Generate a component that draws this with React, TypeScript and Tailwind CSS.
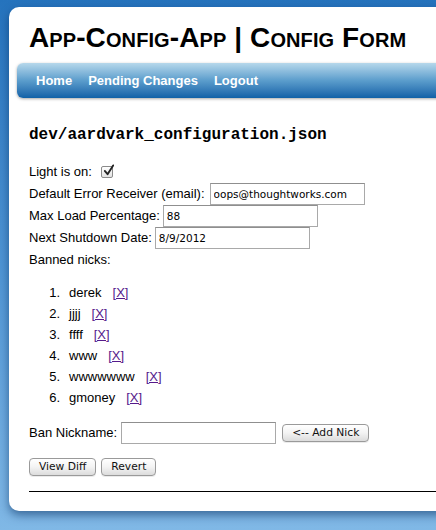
import React from "react";

const sans = { fontFamily: '"Liberation Sans", Arial, Helvetica, sans-serif' };

function MacButton({ children }: { children: React.ReactNode }) {
  return (
    <button
      type="button"
      className="h-[18px] px-[9px] rounded-[4px] border border-[#9a9a9a] bg-gradient-to-b from-[#ffffff] via-[#f3f3f3] to-[#dcdcdc] text-[10.7px] leading-[16px] text-[#111] shadow-[0_1px_0_rgba(0,0,0,0.08)] [font-family:'DejaVu_Sans',Verdana,sans-serif]"
    >
      {children}
    </button>
  );
}

function TextInput({ value, width = "w-[155px]" }: { value?: string; width?: string }) {
  return (
    <input
      type="text"
      defaultValue={value}
      className={`${width} h-[22px] border border-[#a9a9a9] border-t-[#8f8f8f] bg-white px-[3px] text-[10.5px] text-black outline-none [font-family:'DejaVu_Sans',Verdana,sans-serif]`}
    />
  );
}

export default function App() {
  const nicks = ["derek", "jjjj", "ffff", "www", "wwwwwww", "gmoney"];
  return (
    <div
      className="w-[436px] h-[530px] overflow-hidden bg-gradient-to-b from-[#2573bd] via-[#4f95d4] to-[#80b8e6] pt-[7px] pl-[9px]"
      style={sans}
    >
      <div className="w-[470px] bg-white rounded-l-[10px] pt-[15px] pb-[19px] shadow-[0_4px_10px_rgba(0,40,90,0.55)] text-[13px] text-black">
        <h1 className="px-[20px] h-[32px] text-[28px] leading-[32px] font-bold [font-variant:small-caps] whitespace-nowrap tracking-[0.1px]">
          App-Config-App | Config Form
        </h1>

        <nav className="mt-[9px] ml-[8px] h-[35px] rounded-[6px] bg-gradient-to-b from-[#b6d8eb] via-[#5b9dcc] to-[#0f61a7] shadow-[0_1px_3px_rgba(0,0,0,0.35)] flex items-center pl-[19px] gap-[16px] text-white font-bold text-[13px]">
          <a href="#">Home</a>
          <a href="#">Pending Changes</a>
          <a href="#">Logout</a>
        </nav>

        <div className="px-[20px]">
          <h2 className="mt-[27px] h-[20px] text-[16px] leading-[20px] font-bold [font-family:'Liberation_Mono','Courier_New',monospace]">
            dev/aardvark_configuration.json
          </h2>

          <div className="mt-[15px]">
            <div className="h-[23px] flex items-center">
              <span>Light is on:</span>
              <span className="ml-[9px] relative w-[12px] h-[12px] rounded-[2px] border border-[#8a8a8a] bg-gradient-to-b from-white to-[#e2e2e2]">
                <svg viewBox="0 0 14 14" className="absolute -top-[3px] left-[0px] w-[13px] h-[13px]">
                  <path d="M3 7.5 L6 11 L12 1.5" fill="none" stroke="#222" strokeWidth="2" strokeLinecap="round" strokeLinejoin="round" />
                </svg>
              </span>
            </div>
            <div className="h-[22px] flex items-center">
              <span>Default Error Receiver (email):</span>
              <span className="ml-[5px]">
                <TextInput value="oops@thoughtworks.com" />
              </span>
            </div>
            <div className="h-[22px] flex items-center">
              <span>Max Load Percentage:</span>
              <span className="ml-[3px]">
                <TextInput value="88" />
              </span>
            </div>
            <div className="h-[22px] flex items-center">
              <span>Next Shutdown Date:</span>
              <span className="ml-[3px]">
                <TextInput value="8/9/2012" />
              </span>
            </div>
            <div className="h-[22px] flex items-center">
              <span>Banned nicks:</span>
            </div>
          </div>

          <ol className="mt-[11px]">
            {nicks.map((n, i) => (
              <li key={n} className="h-[21px] flex items-center">
                <span className="w-[31px] text-right">{i + 1}.</span>
                <span className="ml-[9px]">{n}</span>
                <a href="#" className="ml-[11px] text-[#551a8b] underline">
                  [X]
                </a>
              </li>
            ))}
          </ol>

          <div className="mt-[14px] h-[22px] flex items-center">
            <span>Ban Nickname:</span>
            <span className="ml-[4px]">
              <TextInput />
            </span>
            <span className="ml-[6px] flex">
              <MacButton>&lt;-- Add Nick</MacButton>
            </span>
          </div>

          <div className="mt-[14px] flex gap-[5px]">
            <MacButton>View Diff</MacButton>
            <MacButton>Revert</MacButton>
          </div>

          <hr className="mt-[15px] border-0 h-[1px] bg-black" />
        </div>
      </div>
    </div>
  );
}
